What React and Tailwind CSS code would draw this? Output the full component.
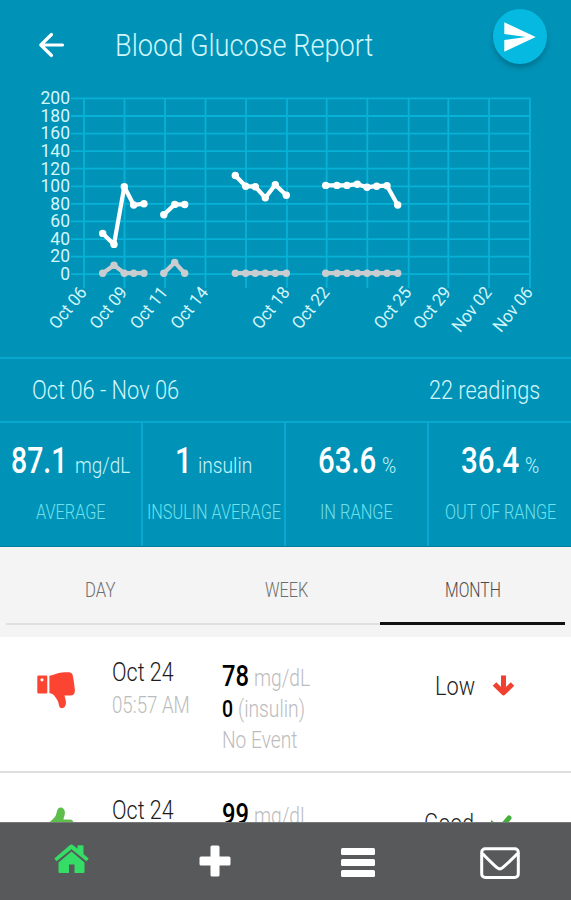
import { useLayoutEffect, useRef } from "react";

// Single-line text condensed horizontally to the width of its box.
function Fit({ className = "", children }) {
  const box = useRef(null);
  const text = useRef(null);
  useLayoutEffect(() => {
    const natural = text.current.offsetWidth;
    if (natural > 0) {
      text.current.style.transform = `scaleX(${box.current.clientWidth / natural})`;
    }
  }, [children]);
  return (
    <span ref={box} className={`block shrink-0 whitespace-nowrap ${className}`}>
      <span ref={text} className="inline-block origin-left">
        {children}
      </span>
    </span>
  );
}

const ticks = [84, 124.5, 165, 205.5, 246, 287, 326.7, 367.3, 408.7, 448.3, 489, 530];
const dates = ["Oct 06", "Oct 09", "Oct 11", "Oct 14", "", "Oct 18", "Oct 22", "", "Oct 25", "Oct 29", "Nov 02", "Nov 06"];
const levels = [200, 180, 160, 140, 120, 100, 80, 60, 40, 20, 0];

const glucose = [
  [[102.7, 143.7], [114, 154.7], [124.3, 97], [133.7, 115.3], [144, 114]],
  [[163.8, 125], [174.7, 114.7], [184.7, 114.8]],
  [[235.3, 85.8], [245.7, 96.5], [255.3, 97], [265.3, 108], [275.3, 95], [286.3, 105.5]],
  [[325.7, 95.7], [337, 95.7], [347, 95.7], [357.3, 94.5], [367, 97.5], [376.7, 96.5], [387, 96], [397.7, 115.3]],
];
const insulin = [
  [[102.7, 183.5], [114, 175.5], [124.3, 183.5], [133.7, 183.5], [144, 183.5]],
  [[163.8, 183.5], [174.7, 172.7], [184.7, 183.5]],
  [[235.3, 183.5], [245.7, 183.5], [255.3, 183.5], [265.3, 183.5], [275.3, 183.5], [286.3, 183.5]],
  [[325.7, 183.5], [337, 183.5], [347, 183.5], [357.3, 183.5], [367, 183.5], [376.7, 183.5], [387, 183.5], [397.7, 183.5]],
];

function Series({ runs, color }) {
  return (
    <g fill={color} stroke={color} transform="translate(0 .7)">
      {runs.map((run, i) => (
        <g key={i}>
          <polyline points={run.map((p) => p.join(",")).join(" ")} fill="none" strokeWidth="4.2" strokeLinejoin="round" />
          {run.map(([x, y]) => (
            <circle key={x} cx={x} cy={y} r="3.7" stroke="none" />
          ))}
        </g>
      ))}
    </g>
  );
}

function Chart() {
  return (
    <svg className="block" width="571" height="268" viewBox="0 0 571 268">
      <g stroke="#08b1d6" strokeWidth="1.8">
        {levels.map((v, i) => (
          <line key={v} x1="71" x2="530" y1={9.4 + i * 17.58} y2={9.4 + i * 17.58} />
        ))}
        {ticks.map((x) => (
          <line key={x} x1={x} x2={x} y1="9" y2="199" />
        ))}
      </g>
      <g fill="#d3f6fb">
        {levels.map((v, i) => (
          <text key={v} x="70" y={15.2 + i * 17.58} fontSize="17.500" textAnchor="end">
            {v}
          </text>
        ))}
        {ticks.map((x, i) => (
          <text key={x} transform={`translate(${x + 3.7} 203.7) rotate(-51) scale(.95 1)`} fontSize="17.500" textAnchor="end">
            {dates[i]}
          </text>
        ))}
      </g>
      <Series runs={insulin} color="#c9cdd0" />
      <Series runs={glucose} color="#ffffff" />
    </svg>
  );
}

function Stat({ value, valueW, unit, unitW, gap, label, labelW, last }) {
  return (
    <div className={`flex flex-col items-center pt-[18px] ${last ? "" : "border-r-2 border-[#08a8cf]"}`}>
      <div className={`flex h-10 items-baseline leading-10 ${gap}`}>
        <Fit className={`text-[37px] font-medium text-white ${valueW}`}>{value}</Fit>
        <Fit className={`text-[22px] font-light text-[#c9f5fb] ${unitW}`}>{unit}</Fit>
      </div>
      <Fit className={`mt-[21px] text-[20px] leading-5 font-light text-[#6fe0ee] ${labelW}`}>{label}</Fit>
    </div>
  );
}

function ThumbDown() {
  return (
    <svg className="block" width="38" height="37" viewBox="0 0 38 37" fill="#fc4432">
      <path
        fillRule="evenodd"
        d="M1.5 3.5H9.3Q10.3 3.5 10.3 4.5V20.5Q10.3 21.5 9.3 21.5H1.5Q.3 21.5.3 20.3V4.7Q.3 3.5 1.5 3.5ZM5 6.2A1.6 1.6 0 1 0 5 9.4A1.6 1.6 0 1 0 5 6.2Z"
      />
      <path d="M12.400 3.800C17 3.200 20 1 25 .6C28 .3 31 .2 33 .6C35 1 35.800 2.500 36 5C36.800 8 37.200 12 37.600 16C38.400 20 37.600 23.300 34 23.600H27.500C27.800 26 29.200 28 28.900 31C28.700 34 27.500 36.200 25 36.200C22.300 36.200 22 33.500 21.500 31C20.800 28 17.500 23.500 15.500 22C14.500 21.300 13.500 21.200 12.400 21.200Z" />
    </svg>
  );
}

function ThumbUp() {
  return (
    <svg className="block" width="38" height="37" viewBox="0 0 38 37" fill="#5ebd4b">
      <path d="M1.500 16H9.300Q10.300 16 10.300 17V33Q10.300 34 9.300 34H1.500Q.3 34 .3 32.800V17.200Q.3 16 1.500 16Z" />
      <path d="M12.400 16C15 14 18.500 11 20 8C21 5.500 21 .6 24.500 .6C28 .6 29.200 4 28.800 7C28.500 9 27.500 11 27.500 12.500H34C37.500 13 38.300 16 37.600 20L36 31C35.500 34.500 34 36 31 36C24 36 18 34.500 12.400 33.500Z" />
    </svg>
  );
}

function Reading({ thumb, value, status, statusW, statusPad, icon }) {
  return (
    <div className="flex h-[138px] shrink-0 border-b-2 border-[#dedede] font-light">
      <div className="w-[112px] pt-[37px] pl-[37px]">{thumb}</div>
      <div className="w-[110px] pt-[22px]">
        <Fit className="w-[62px] text-[26px] leading-[30px] text-[#1c1c1c]">Oct 24</Fit>
        <Fit className="mt-[6px] w-[78px] text-[23px] leading-[26px] text-[#bcbcbc]">05:57 AM</Fit>
      </div>
      <div className="w-[202px] pt-[25px] text-[23px] text-[#bcbcbc]">
        <div className="flex h-[32px] items-baseline gap-[5px] leading-[32px]">
          <Fit className="w-[27px] text-[29px] font-medium text-black">{value}</Fit>
          <Fit className="w-[56px]">mg/dL</Fit>
        </div>
        <div className="mt-[3px] flex h-[30px] items-baseline gap-[5px] leading-[30px]">
          <Fit className="w-[11px] font-medium text-black">0</Fit>
          <Fit className="w-[67px]">(insulin)</Fit>
        </div>
        <Fit className="mt-px w-[75px] leading-[30px]">No Event</Fit>
      </div>
      <div className={`flex items-start pt-[37px] ${statusPad}`}>
        <Fit className={`text-[25px] leading-[30px] text-[#222222] ${statusW}`}>{status}</Fit>
        <span className="mt-[3px] ml-[17px]">{icon}</span>
      </div>
    </div>
  );
}

export default function App() {
  return (
    <div className="flex h-[900px] w-[571px] flex-col overflow-hidden bg-white font-[Roboto,sans-serif]">
      <div className="shrink-0 bg-[#0093b7]">
        <header className="flex h-[89px] items-center">
          <svg
            className="ml-[38px]"
            width="27"
            height="28"
            viewBox="0 0 27 28"
            fill="none"
            stroke="#fff"
            strokeWidth="3.2"
            strokeLinecap="round"
            strokeLinejoin="round"
          >
            <path d="M24.500 14H3.500M13.500 3.500L2.800 14L13.500 24.500" />
          </svg>
          <Fit className="ml-[50px] w-[258px] text-[32px] leading-10 font-light text-[#d0f6fb]">Blood Glucose Report</Fit>
          <div className="mt-[9px] ml-[120px] flex h-[55px] w-[54px] items-center justify-center self-start rounded-full bg-[#05b9e0] shadow-[0_4px_5px_rgba(0,60,80,0.35)]">
            <svg width="32" height="30" viewBox="0 0 32 30" fill="#fff">
              <path d="M.3.3L31.700 15L.3 29.700V18L22 15L.3 12Z" />
            </svg>
          </div>
        </header>

        <Chart />

        <div className="flex h-[64px] items-center justify-between border-t-2 border-[#08a8cf] pr-[31px] pl-[32px] pb-px text-[26px] leading-8 font-light text-[#d0f6fb]">
          <Fit className="w-[147px]">Oct 06 - Nov 06</Fit>
          <Fit className="w-[111px]">22 readings</Fit>
        </div>

        <div className="grid h-[126px] grid-cols-[143px_143px_143px_142px] border-t-2 border-b border-t-[#08a8cf] border-b-[#067d9c]">
          <Stat value="87.1" valueW="w-[56px]" unit="mg/dL" unitW="w-[55px]" gap="gap-[8px]" label="AVERAGE" labelW="w-[70px]" />
          <Stat value="1" valueW="w-[17px]" unit="insulin" unitW="w-[54px]" gap="gap-[6px]" label="INSULIN AVERAGE" labelW="w-[134px]" />
          <Stat value="63.6" valueW="w-[58px]" unit="%" unitW="w-[14px]" gap="gap-[6px]" label="IN RANGE" labelW="w-[73px]" />
          <Stat value="36.4" valueW="w-[58px]" unit="%" unitW="w-[14px]" gap="gap-[6px]" label="OUT OF RANGE" labelW="w-[111px]" last />
        </div>
      </div>

      <nav className="flex h-[90px] shrink-0 bg-[#f4f4f4] px-[6px] text-[20px] leading-5 font-light text-[#6e6e6e]">
        <div className="flex h-[78px] w-[187px] justify-center border-b-2 border-[#dfdfdf] pt-[33px]">
          <Fit className="w-[30px]">DAY</Fit>
        </div>
        <div className="flex h-[78px] w-[187px] justify-center border-b-2 border-[#dfdfdf] pt-[33px]">
          <Fit className="w-[43px]">WEEK</Fit>
        </div>
        <div className="flex h-[78px] w-[185px] justify-center border-b-3 border-[#111111] pt-[33px]">
          <Fit className="w-[56px] text-[#4a4a4a]">MONTH</Fit>
        </div>
      </nav>

      <main className="flex h-[185px] shrink-0 flex-col overflow-hidden">
        <div className="-mt-[2px] flex flex-col">
          <Reading
            thumb={<ThumbDown />}
            value="78"
            status="Low"
            statusW="w-[40px]"
            statusPad="pl-[11px]"
            icon={
              <svg className="block" width="23" height="22" viewBox="0 0 23 22" fill="none" stroke="#f0402e" strokeWidth="5">
                <path d="M11.500 .5V18M2.500 9L11.500 17.800L20.500 9" strokeLinejoin="round" />
              </svg>
            }
          />
          <Reading
            thumb={<div className="-mt-[3px] -ml-px"><ThumbUp /></div>}
            value="99"
            status="Good"
            statusW="w-[50px]"
            statusPad="pl-0 -mt-px"
            icon={
              <svg className="block" width="24" height="22" viewBox="0 0 24 22" fill="none" stroke="#45ae3c" strokeWidth="5">
                <path d="M0 11L8 18L18 6" strokeLinecap="round" />
              </svg>
            }
          />
        </div>
      </main>

      <footer className="grid h-[78px] shrink-0 grid-cols-4 items-start border-t border-[#77787a] bg-[#58595b]">
        <svg className="mt-[21px] ml-[54px]" width="35" height="30" viewBox="0 0 35 30" fill="#35dc66">
          <path d="M17.500 7.500L30.500 18.500V28Q30.500 29 29.500 29H20.500V20.500H15V29H5.500Q4.500 29 4.500 28V18.500Z" />
          <path d="M17.500 .5Q18.300 .5 19 1L23.500 4.800V2Q23.500 1.200 24.300 1.200H28.700Q29.500 1.200 29.500 2V10L34.700 14.500L32.500 17.200L17.500 5.200L2.500 17.200L.3 14.500L16 1Q16.700 .5 17.500 .5Z" />
          <path d="M3 18L17.500 6.200L32 18" fill="none" stroke="#58595b" strokeWidth="1" />
        </svg>
        <svg className="mt-[22px] ml-[56px]" width="32" height="32" viewBox="0 0 32 32" fill="#fff">
          <rect x="11.500" y=".5" width="9" height="31" rx="1.500" />
          <rect x=".5" y="11.500" width="31" height="9" rx="1.500" />
        </svg>
        <svg className="mt-[24px] ml-[55px]" width="34" height="31" viewBox="0 0 34 31" fill="#fff">
          <rect x="0" y="1" width="34" height="7" rx="1.500" />
          <rect x="0" y="12" width="34" height="7" rx="1.500" />
          <rect x="0" y="23" width="34" height="7" rx="1.500" />
        </svg>
        <svg className="mt-[24px] ml-[52px]" width="40" height="32" viewBox="0 0 40 32" fill="none" stroke="#fff" strokeWidth="3">
          <rect x="1.700" y="1.700" width="36.600" height="28.800" rx="3.500" />
          <path d="M2.500 6.500C8 12.500 12 16 17 20.700Q19.800 23 22.600 20.700C28 16 32 12.500 37.500 6.500" />
        </svg>
      </footer>
    </div>
  );
}
